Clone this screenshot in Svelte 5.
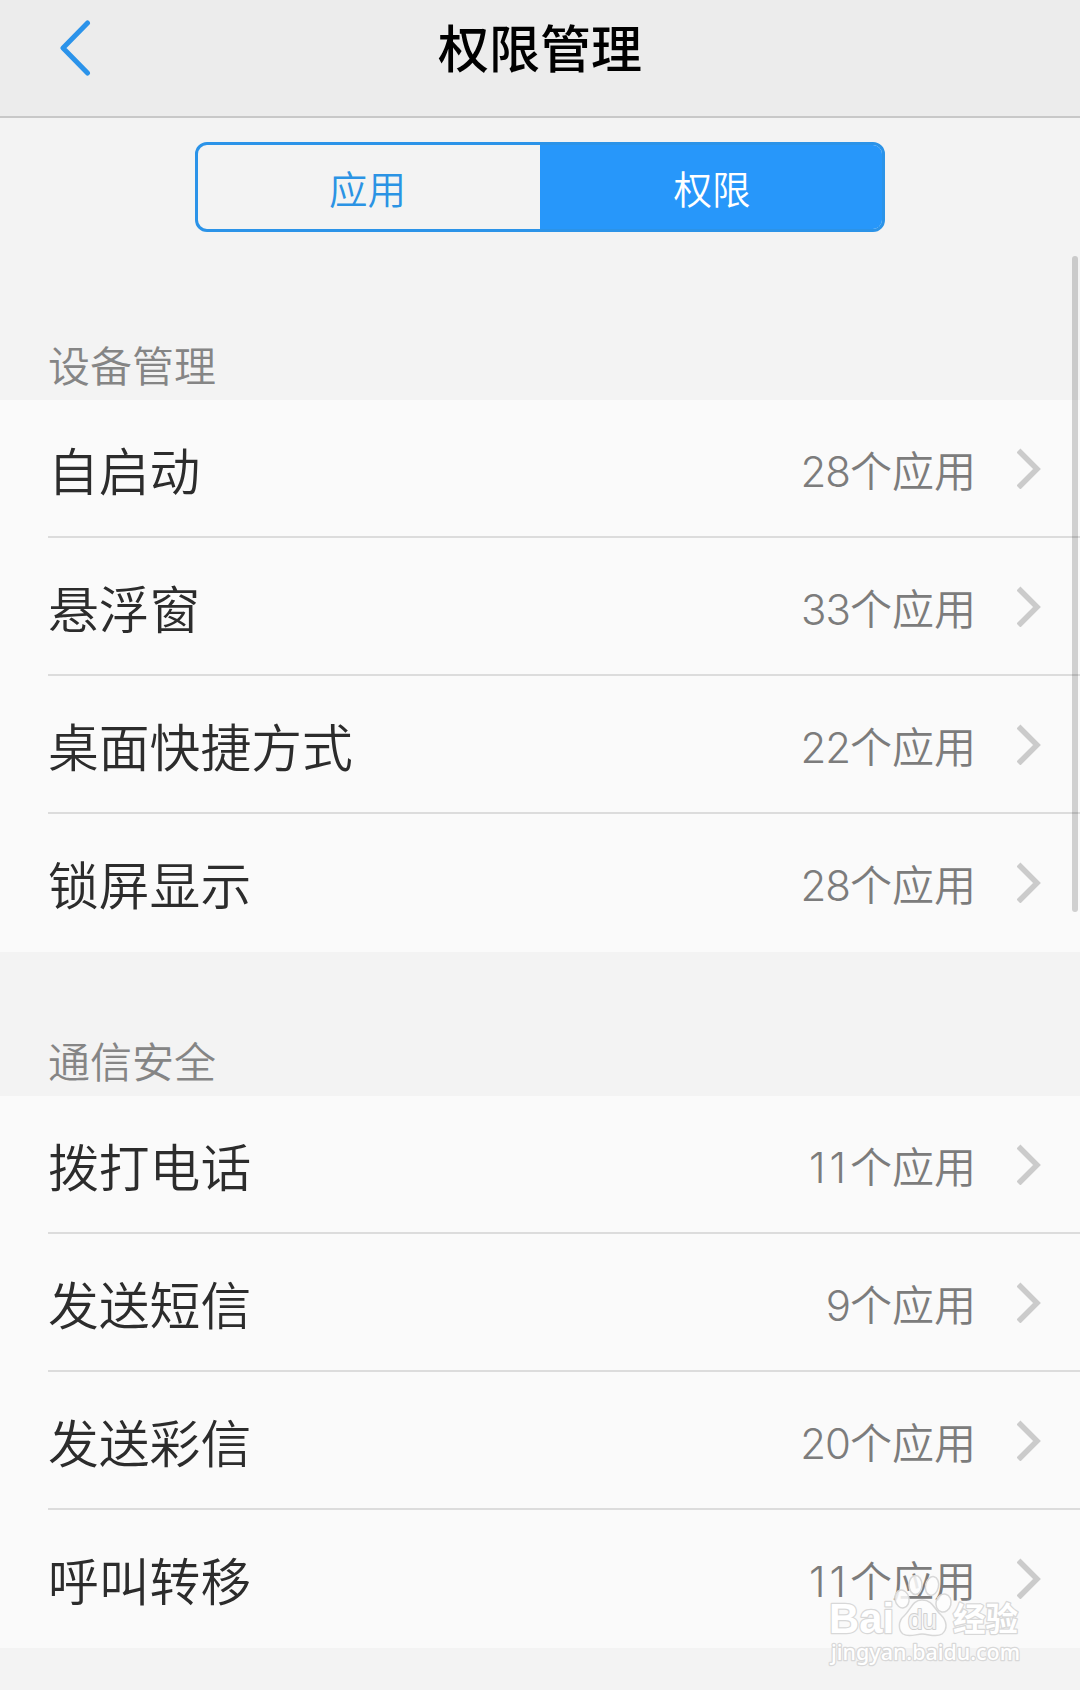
<script lang="ts">
  type Permission = { name: string; count: number };
  type Group = { title: string; items: Permission[] };

  let activeTab = $state(1);
  const tabs = ['应用', '权限'];

  const groups: Group[] = [
    {
      title: '设备管理',
      items: [
        { name: '自启动', count: 28 },
        { name: '悬浮窗', count: 33 },
        { name: '桌面快捷方式', count: 22 },
        { name: '锁屏显示', count: 28 },
      ],
    },
    {
      title: '通信安全',
      items: [
        { name: '拨打电话', count: 11 },
        { name: '发送短信', count: 9 },
        { name: '发送彩信', count: 20 },
        { name: '呼叫转移', count: 11 },
      ],
    },
  ];
</script>

<div class="screen">
  <header>
    <button class="back" aria-label="返回">
      <svg width="32" height="60" viewBox="0 0 32 60">
        <path d="M28.500 6 L4 31 L28.500 56" />
      </svg>
    </button>
    <h1>权限管理</h1>
  </header>

  <nav>
    {#each tabs as tab, i}
      <button class:active={activeTab === i} onclick={() => (activeTab = i)}>{tab}</button>
    {/each}
  </nav>

  {#each groups as group}
    <section>
      <h2>{group.title}</h2>
      <ul>
        {#each group.items as item}
          <li>
            <span class="name">{item.name}</span>
            <span class="count"><span class="num" class:ones={item.count === 11}>{item.count}</span>个应用</span>
            <svg class="arrow" width="24" height="42" viewBox="0 0 24 42">
              <path d="M1.500 3.500 L20 22 L1.500 40.500" />
            </svg>
          </li>
        {/each}
      </ul>
    </section>
  {/each}

  <div class="scrollbar"></div>

  <svg class="watermark" width="210" height="110" viewBox="820 1570 210 110">
    <g class="mark">
      <ellipse cx="902" cy="1599" rx="7" ry="9" transform="rotate(-12 902 1599)" />
      <ellipse cx="915.500" cy="1585" rx="6.500" ry="9.500" />
      <ellipse cx="932" cy="1586" rx="6.500" ry="9.500" transform="rotate(12 932 1586)" />
      <ellipse cx="943.500" cy="1603" rx="7.500" ry="9" transform="rotate(15 943.500 1603)" />
      <path
        d="M922 1600 C912 1600 911 1610 904 1616 C898 1621 898 1630 903 1634 C909 1638 916 1634 922 1634 C929 1634 936 1638 942 1634 C948 1629 947 1621 941 1615 C934 1609 933 1600 922 1600 Z"
      />
      <text class="bai" x="829" y="1633" textLength="65" lengthAdjust="spacingAndGlyphs">Bai</text>
      <text class="du" x="908" y="1629" textLength="29" lengthAdjust="spacingAndGlyphs">du</text>
      <text class="cn" x="953" y="1631" textLength="65" lengthAdjust="spacingAndGlyphs">经验</text>
      <text class="url" x="831" y="1660" textLength="189" lengthAdjust="spacingAndGlyphs">jingyan.baidu.com</text>
    </g>
  </svg>
</div>

<style>
  :global(body) {
    background: #f3f3f3;
  }

  .screen {
    position: relative;
    width: 1080px;
    height: 1690px;
    overflow: hidden;
    background: #f3f3f3;
    font-family: 'Noto Sans CJK SC', sans-serif;
    font-weight: 350;
  }

  button {
    padding: 0;
    border: 0;
    background: none;
    font: inherit;
  }

  header {
    box-sizing: border-box;
    display: grid;
    grid-template-columns: 120px 1fr 120px;
    align-items: center;
    height: 118px;
    padding-bottom: 24px;
    border-bottom: 2px solid #c8c8c8;
    background: #ececec;
  }

  .back {
    display: flex;
    padding: 2px 0 0 59px;
  }

  .back path {
    fill: none;
    stroke: #2b93ea;
    stroke-width: 5;
    stroke-linecap: round;
    stroke-linejoin: round;
  }

  h1 {
    margin: 0;
    color: #000;
    font-size: 51px;
    font-weight: 500;
    line-height: 92px;
    text-align: center;
  }

  nav {
    box-sizing: border-box;
    display: flex;
    width: 690px;
    height: 90px;
    margin: 24px auto 0;
    border: 3px solid #2b93e8;
    border-radius: 12px;
    overflow: hidden;
  }

  nav button {
    flex: 1 1 50%;
    box-sizing: border-box;
    padding: 0 3px 0 0;
    color: #2b93e4;
    font-size: 38.5px;
    line-height: 1;
  }

  nav button.active {
    padding: 0 0 0 2px;
    background: #2797fa;
    color: #fff;
  }

  h2 {
    box-sizing: border-box;
    height: 144px;
    margin: 0;
    padding: 76px 48px 0;
    color: #858585;
    font-size: 42px;
    font-weight: 350;
    line-height: 64px;
  }

  nav + section {
    padding-top: 24px;
  }

  ul {
    margin: 0;
    padding: 0;
    background: #fafafa;
    list-style: none;
  }

  li {
    box-sizing: border-box;
    display: flex;
    align-items: center;
    height: 138px;
    margin-left: 48px;
    padding-right: 39px;
    border-bottom: 2px solid #dcdcdc;
  }

  li:last-child {
    border-bottom-color: transparent;
  }

  .name {
    flex: 1;
    padding-top: 1px;
    color: #2c2c2c;
    font-size: 50.8px;
    line-height: 80px;
  }

  .count {
    padding-top: 5px;
    margin-right: 41px;
    color: #7c7c7c;
    font-size: 42px;
    line-height: 64px;
  }

  .num {
    font-family: Inter, sans-serif;
    font-weight: 300;
    letter-spacing: -1px;
  }

  .num.ones {
    letter-spacing: 4px;
  }

  .arrow path {
    fill: none;
    stroke: #cbcbcb;
    stroke-width: 5.5;
  }

  .scrollbar {
    position: absolute;
    top: 256px;
    right: 2px;
    width: 6px;
    height: 656px;
    border-radius: 3px;
    background: rgba(0, 0, 0, 0.17);
  }

  .watermark {
    position: absolute;
    left: 820px;
    top: 1570px;
    overflow: visible;
  }

  .mark {
    fill: #fdfdfd;
    fill-opacity: 0.85;
    stroke: #d8d8d8;
    stroke-width: 1.5;
  }

  .mark text {
    fill: #fff;
    fill-opacity: 1;
    paint-order: stroke;
    stroke: #d8d8d8;
    stroke-width: 2.5;
    stroke-linejoin: round;
  }

  .bai {
    font: 700 43px 'Liberation Sans', sans-serif;
  }

  .mark .du {
    font: 400 27px 'Liberation Sans', sans-serif;
    fill: #f4f4f4;
    stroke: #d0d0d0;
    stroke-width: 2;
  }

  .cn {
    font: 700 33px 'Noto Sans CJK SC', sans-serif;
  }

  .url {
    font: 500 22px 'Noto Sans', sans-serif;
  }
</style>
